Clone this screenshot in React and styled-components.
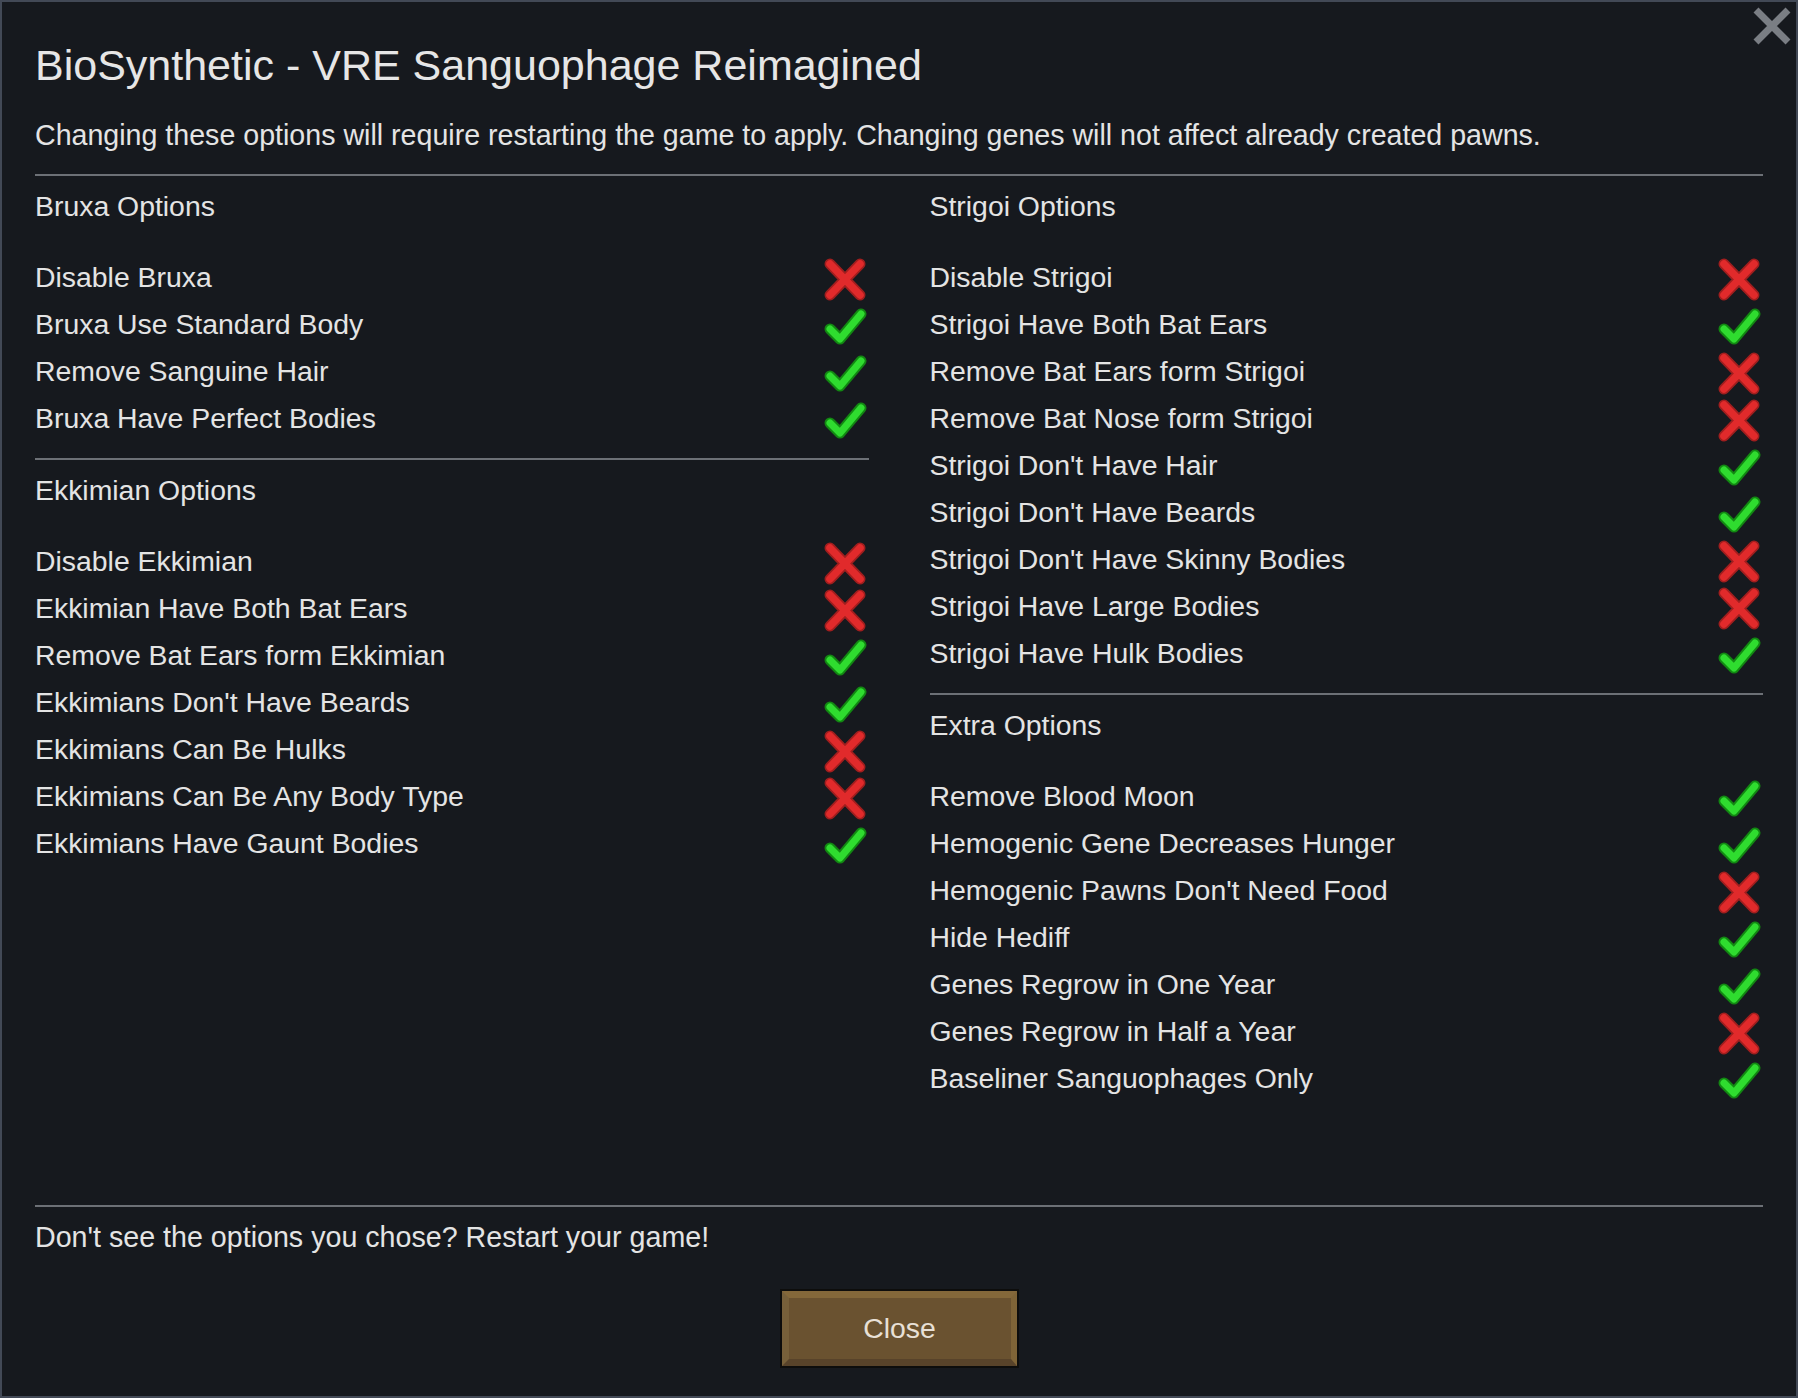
import React from 'react';
import styled, { createGlobalStyle } from 'styled-components';

const GlobalStyle = createGlobalStyle`
  html, body {
    margin: 0;
    padding: 0;
    background: #16191e;
  }
  * {
    box-sizing: border-box;
  }
`;

const Window = styled.div`
  position: relative;
  width: 1798px;
  height: 1398px;
  display: flex;
  flex-direction: column;
  padding: 37px 33px 30px;
  background: #16191e;
  border: 2px solid #424956;
  color: #e4e4e4;
  font-family: "Liberation Sans", Arial, sans-serif;
  -webkit-font-smoothing: antialiased;
`;

const CloseCross = styled.button`
  position: absolute;
  top: 5px;
  right: 5px;
  width: 38px;
  height: 38px;
  padding: 0;
  border: 0;
  background: none;
  cursor: pointer;
  svg {
    display: block;
  }
`;

const Title = styled.h1`
  margin: 0;
  font-size: 43px;
  line-height: 52px;
  font-weight: 400;
  color: #e6e6e6;
`;

const Subtitle = styled.p`
  margin: 26px 0 0;
  font-size: 28.6px;
  line-height: 36px;
`;

const Divider = styled.div`
  height: 2px;
  margin-top: ${(p) => p.$top || 0}px;
  background: #6c7076;
  flex-shrink: 0;
`;

const Columns = styled.div`
  flex: 1;
  display: grid;
  grid-template-columns: 1fr 1fr;
  column-gap: 61px;
  align-items: start;
`;

const Column = styled.div`
  display: flex;
  flex-direction: column;
`;

const SectionTitle = styled.div`
  margin-top: 7px;
  font-size: 28.4px;
  line-height: 47px;
`;

const List = styled.div`
  margin-top: 24px;
  display: flex;
  flex-direction: column;
`;

const Row = styled.div`
  height: 47px;
  display: flex;
  align-items: center;
  justify-content: space-between;
`;

const Label = styled.span`
  font-size: 28.4px;
  line-height: 47px;
`;

const Mark = styled.span`
  width: 44px;
  height: 44px;
  margin-top: 6px;
  margin-right: 2px;
  svg {
    display: block;
  }
`;

const Footer = styled.p`
  margin: 7px 0 0;
  font-size: 28.65px;
  line-height: 47px;
`;

const CloseButton = styled.button`
  align-self: center;
  width: 235px;
  height: 75px;
  margin-top: 30px;
  padding: 0;
  background: #6a5230;
  border-style: solid;
  border-width: 7px 6px 7px 7px;
  border-color: #84683a #7f6437 #58432a #77603a;
  box-shadow: 0 0 0 2px #0d0d0c;
  color: #e8e0d6;
  font-family: "Liberation Sans", Arial, sans-serif;
  font-size: 28.4px;
  cursor: pointer;
`;

const Check = () => (
  <svg width="44" height="44" viewBox="0 0 44 44">
    <path d="M7 24 L17 34 L38 9" fill="none" stroke="#128812" strokeWidth="11" strokeLinecap="round" strokeLinejoin="round" />
    <path d="M7 24 L17 34 L38 9" fill="none" stroke="#2fdc2f" strokeWidth="7" strokeLinecap="round" strokeLinejoin="round" />
  </svg>
);

const Cross = () => (
  <svg width="44" height="44" viewBox="0 0 44 44">
    <path d="M7 6 L37 37 M37 6 L7 37" fill="none" stroke="#a11e1e" strokeWidth="11" strokeLinecap="round" />
    <path d="M7 6 L37 37 M37 6 L7 37" fill="none" stroke="#e12a2b" strokeWidth="7.5" strokeLinecap="round" />
  </svg>
);

const sections = {
  left: [
    {
      title: 'Bruxa Options',
      rows: [
        ['Disable Bruxa', false],
        ['Bruxa Use Standard Body', true],
        ['Remove Sanguine Hair', true],
        ['Bruxa Have Perfect Bodies', true],
      ],
    },
    {
      title: 'Ekkimian Options',
      rows: [
        ['Disable Ekkimian', false],
        ['Ekkimian Have Both Bat Ears', false],
        ['Remove Bat Ears form Ekkimian', true],
        ["Ekkimians Don't Have Beards", true],
        ['Ekkimians Can Be Hulks', false],
        ['Ekkimians Can Be Any Body Type', false],
        ['Ekkimians Have Gaunt Bodies', true],
      ],
    },
  ],
  right: [
    {
      title: 'Strigoi Options',
      rows: [
        ['Disable Strigoi', false],
        ['Strigoi Have Both Bat Ears', true],
        ['Remove Bat Ears form Strigoi', false],
        ['Remove Bat Nose form Strigoi', false],
        ["Strigoi Don't Have Hair", true],
        ["Strigoi Don't Have Beards", true],
        ["Strigoi Don't Have Skinny Bodies", false],
        ['Strigoi Have Large Bodies', false],
        ['Strigoi Have Hulk Bodies', true],
      ],
    },
    {
      title: 'Extra Options',
      rows: [
        ['Remove Blood Moon', true],
        ['Hemogenic Gene Decreases Hunger', true],
        ["Hemogenic Pawns Don't Need Food", false],
        ['Hide Hediff', true],
        ['Genes Regrow in One Year', true],
        ['Genes Regrow in Half a Year', false],
        ['Baseliner Sanguophages Only', true],
      ],
    },
  ],
};

const OptionColumn = ({ items }) => (
  <Column>
    {items.map((section, i) => (
      <React.Fragment key={section.title}>
        {i > 0 && <Divider $top={16} />}
        <SectionTitle>{section.title}</SectionTitle>
        <List>
          {section.rows.map(([label, on]) => (
            <Row key={label}>
              <Label>{label}</Label>
              <Mark>{on ? <Check /> : <Cross />}</Mark>
            </Row>
          ))}
        </List>
      </React.Fragment>
    ))}
  </Column>
);

export default function App() {
  return (
    <>
      <GlobalStyle />
      <Window>
        <CloseCross aria-label="Close">
          <svg width="38" height="38" viewBox="0 0 38 38">
            <path d="M3 3 L35 35 M35 3 L3 35" stroke="#7a7e84" strokeWidth="7" />
          </svg>
        </CloseCross>
        <Title>BioSynthetic - VRE Sanguophage Reimagined</Title>
        <Subtitle>
          Changing these options will require restarting the game to apply. Changing genes will not affect already created pawns.
        </Subtitle>
        <Divider $top={20.5} />
        <Columns>
          <OptionColumn items={sections.left} />
          <OptionColumn items={sections.right} />
        </Columns>
        <Divider />
        <Footer>Don't see the options you chose? Restart your game!</Footer>
        <CloseButton>Close</CloseButton>
      </Window>
    </>
  );
}
